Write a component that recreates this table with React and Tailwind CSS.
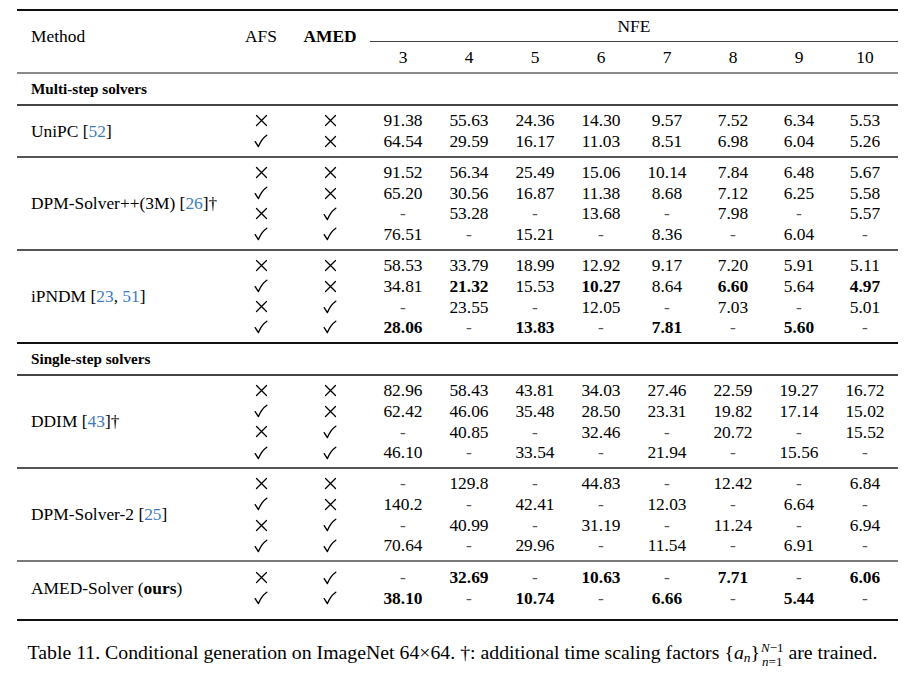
import React from "react";

const COLS = "grid grid-cols-[66px_72px_4px_repeat(8,66px)]";

function Check() {
  return (
    <svg width="14" height="14" viewBox="0 0 14 14" className="block">
      <path d="M1.2 7.6 L4.4 12.6 C6.4 7.6 9 3.8 12.8 1.2" stroke="#000" strokeWidth="1.35" fill="none" strokeLinecap="round" strokeLinejoin="round" />
    </svg>
  );
}

function Cross() {
  return (
    <svg width="13" height="13" viewBox="0 0 13 13" className="block">
      <path d="M1.5 1.5 L11.5 11.5 M11.5 1.5 L1.5 11.5" stroke="#000" strokeWidth="1.3" fill="none" strokeLinecap="round" />
    </svg>
  );
}

function Mark({ v }) {
  return <div className="flex items-center justify-center">{v ? <Check /> : <Cross />}</div>;
}

function Num({ v }) {
  const bold = v.startsWith("*");
  const t = bold ? v.slice(1) : v;
  if (t === "-") return <div className="text-center text-[#555]">-</div>;
  return <div className={"text-center " + (bold ? "font-bold" : "")}>{t}</div>;
}

function Row({ afs, amed, vals }) {
  return (
    <div className={COLS + " h-[20.67px] items-center"}>
      <Mark v={afs} />
      <Mark v={amed} />
      <div />
      {vals.map((v, i) => (
        <Num key={i} v={v} />
      ))}
    </div>
  );
}

function Group({ name, rows, pt = "pt-[4.25px]", pb = "pb-[4.25px]" }) {
  return (
    <div className={"flex " + pt + " " + pb}>
      <div className="w-[211px] flex items-center pl-[14px]">{name}</div>
      <div className="flex flex-col">
        {rows.map((r, i) => (
          <Row key={i} afs={r[0]} amed={r[1]} vals={r[2]} />
        ))}
      </div>
    </div>
  );
}

function Rule({ c = "bg-[#555]", h = "h-[2px]" }) {
  return <div className={h + " " + c} />;
}

function Label({ children }) {
  return (
    <div className="h-[30px] flex items-center pl-[14px] font-bold text-[15.2px]">{children}</div>
  );
}

const Cite = ({ children }) => <span className="text-[#3d7cc2]">{children}</span>;

const O = false;
const I = true;

export default function App() {
  return (
    <div className="w-[910px] min-h-[674px] bg-white text-black pt-[9px] font-['Liberation_Serif','Times_New_Roman',serif]">
      <div className="ml-[17px] w-[881px] text-[17.4px] leading-[20.67px]">
        <Rule c="bg-[#111]" />
        {/* header */}
        <div className="flex h-[61px]">
          <div className="w-[211px] pl-[14px] pt-[15px] leading-[21px]">Method</div>
          <div className="w-[66px] text-center pt-[15px] leading-[21px]">AFS</div>
          <div className="w-[72px] text-center pt-[15px] leading-[21px] font-bold">AMED</div>
          <div className="w-[4px]" />
          <div className="w-[528px] flex flex-col">
            <div className="h-[30px] flex items-center justify-center">NFE</div>
            <div className="h-[1px] bg-[#444]" />
            <div className="h-[30px] grid grid-cols-8 items-center">
              {[3, 4, 5, 6, 7, 8, 9, 10].map((n) => (
                <div key={n} className="text-center">{n}</div>
              ))}
            </div>
          </div>
        </div>
        <Rule c="bg-[#8a8a8a]" />
        <Label>Multi-step solvers</Label>
        <Rule c="bg-[#444]" />
        <Group
          name={<span>UniPC [<Cite>52</Cite>]</span>}
          rows={[
            [O, O, ["91.38", "55.63", "24.36", "14.30", "9.57", "7.52", "6.34", "5.53"]],
            [I, O, ["64.54", "29.59", "16.17", "11.03", "8.51", "6.98", "6.04", "5.26"]],
          ]}
        />
        <Rule />
        <Group
          name={<span>DPM-Solver++(3M) [<Cite>26</Cite>]†</span>}
          rows={[
            [O, O, ["91.52", "56.34", "25.49", "15.06", "10.14", "7.84", "6.48", "5.67"]],
            [I, O, ["65.20", "30.56", "16.87", "11.38", "8.68", "7.12", "6.25", "5.58"]],
            [O, I, ["-", "53.28", "-", "13.68", "-", "7.98", "-", "5.57"]],
            [I, I, ["76.51", "-", "15.21", "-", "8.36", "-", "6.04", "-"]],
          ]}
        />
        <Rule />
        <Group
          name={<span>iPNDM [<Cite>23</Cite>, <Cite>51</Cite>]</span>}
          rows={[
            [O, O, ["58.53", "33.79", "18.99", "12.92", "9.17", "7.20", "5.91", "5.11"]],
            [I, O, ["34.81", "*21.32", "15.53", "*10.27", "8.64", "*6.60", "5.64", "*4.97"]],
            [O, I, ["-", "23.55", "-", "12.05", "-", "7.03", "-", "5.01"]],
            [I, I, ["*28.06", "-", "*13.83", "-", "*7.81", "-", "*5.60", "-"]],
          ]}
        />
        <Rule c="bg-[#111]" />
        <Label>Single-step solvers</Label>
        <Rule c="bg-[#444]" />
        <Group
          name={<span>DDIM [<Cite>43</Cite>]†</span>}
          rows={[
            [O, O, ["82.96", "58.43", "43.81", "34.03", "27.46", "22.59", "19.27", "16.72"]],
            [I, O, ["62.42", "46.06", "35.48", "28.50", "23.31", "19.82", "17.14", "15.02"]],
            [O, I, ["-", "40.85", "-", "32.46", "-", "20.72", "-", "15.52"]],
            [I, I, ["46.10", "-", "33.54", "-", "21.94", "-", "15.56", "-"]],
          ]}
        />
        <Rule />
        <Group
          name={<span>DPM-Solver-2 [<Cite>25</Cite>]</span>}
          rows={[
            [O, O, ["-", "129.8", "-", "44.83", "-", "12.42", "-", "6.84"]],
            [I, O, ["140.2", "-", "42.41", "-", "12.03", "-", "6.64", "-"]],
            [O, I, ["-", "40.99", "-", "31.19", "-", "11.24", "-", "6.94"]],
            [I, I, ["70.64", "-", "29.96", "-", "11.54", "-", "6.91", "-"]],
          ]}
        />
        <Rule c="bg-[#7a7a7a]" />
        <Group
          pt="pt-[5px]"
          pb="pb-[10px]"
          name={<span>AMED-Solver (<b>ours</b>)</span>}
          rows={[
            [O, I, ["-", "*32.69", "-", "*10.63", "-", "*7.71", "-", "*6.06"]],
            [I, I, ["*38.10", "-", "*10.74", "-", "*6.66", "-", "*5.44", "-"]],
          ]}
        />
        <Rule c="bg-[#111]" />
      </div>
      <div className="mt-[20px] ml-[12px] w-[881px] text-center text-[19.8px] leading-[22px] whitespace-nowrap">
        Table 11. Conditional generation on ImageNet 64×64. †: additional time scaling factors{" "}
        <span>
          {"{"}
          <i>a</i>
          <span className="text-[13.5px] italic align-[-3px]">n</span>
          {"}"}
        </span>
        <span className="inline-flex flex-col text-[13px] leading-[14px] align-[7px] ml-[1px]">
          <span>
            <i>N</i>−1
          </span>
          <span>
            <i>n</i>=1
          </span>
        </span>{" "}
        are trained.
      </div>
    </div>
  );
}
